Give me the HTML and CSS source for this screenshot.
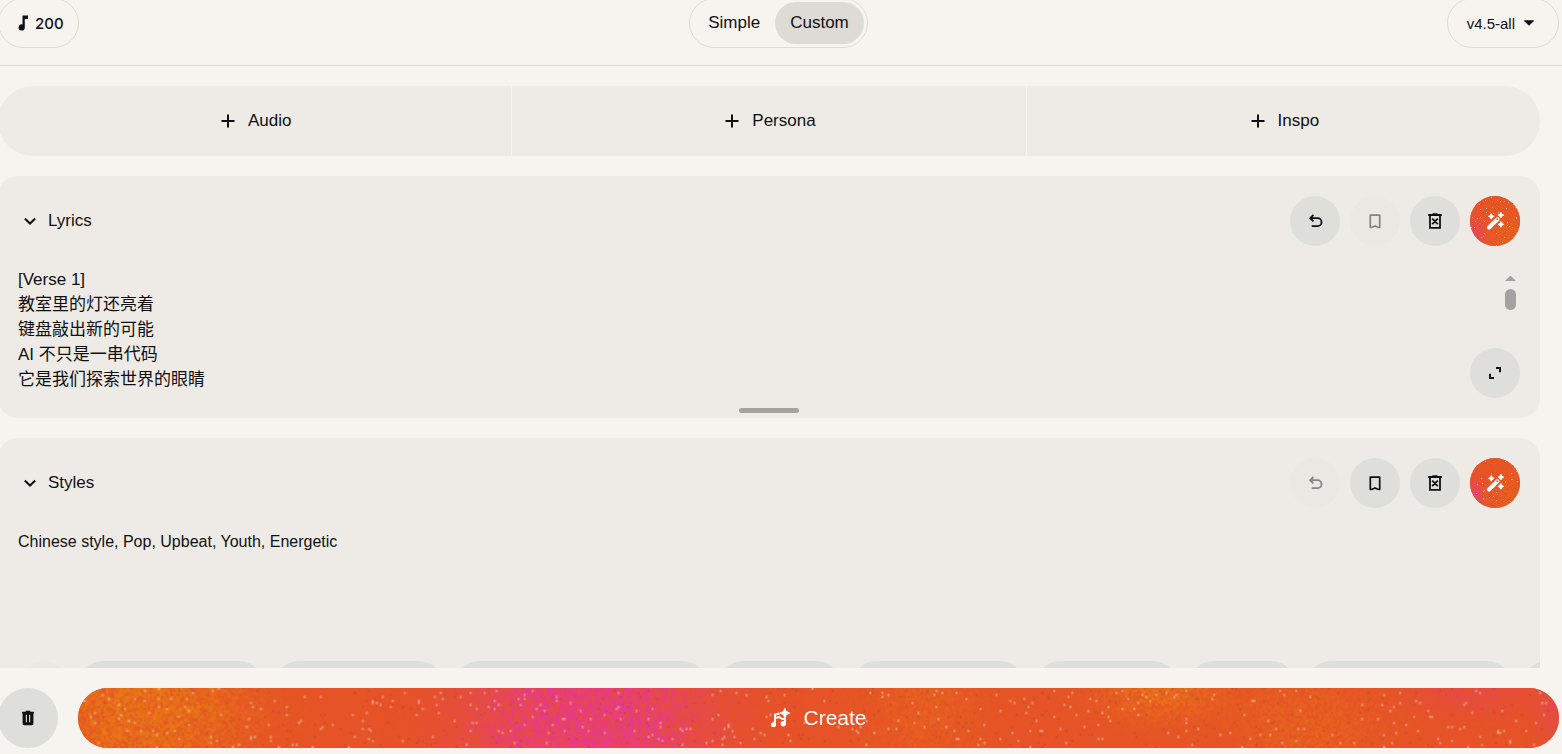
FILE: index.html
```html
<!DOCTYPE html>
<html lang="en">
<head>
  <meta charset="UTF-8">
  <meta name="viewport" content="width=device-width, initial-scale=1.0">
  <title>Create</title>
  <link rel="stylesheet" href="styles.css">
</head>
<body>
  <svg class="sprite" aria-hidden="true">
    <symbol id="plus" viewBox="0 0 20 20"><path d="M10 3.5v13M3.5 10h13" fill="none" stroke="currentColor" stroke-width="2"/></symbol>
    <symbol id="chevron" viewBox="0 0 20 20"><path d="M4.8 7.5l5.2 5 5.2-5" fill="none" stroke="currentColor" stroke-width="2"/></symbol>
    <symbol id="undo" viewBox="0 0 20 20"><path d="M8.4 4L5.2 7.2l3.2 3.2M5.2 7.2h7.4a3.9 3.9 0 0 1 0 7.9H6.7" fill="none" stroke="currentColor" stroke-width="1.8"/></symbol>
    <symbol id="bookmark" viewBox="0 0 20 20"><path d="M5.3 4.2h9.4v12.3q-2.5.2-4.7-1.6-2.2 1.8-4.7 1.6z" fill="none" stroke="currentColor" stroke-width="1.7" stroke-linejoin="round"/></symbol>
    <symbol id="clear" viewBox="0 0 20 20"><path d="M3.2 4h13.6M7.5 3.2h5M5 4v12.8h10V4M7.2 7.6l5.6 5.6M12.8 7.6l-5.6 5.6" fill="none" stroke="currentColor" stroke-width="1.8"/></symbol>
    <symbol id="wand" viewBox="0 0 20 20">
      <path d="M4 16.5L12.5 8.2" stroke="currentColor" stroke-width="4" stroke-linecap="round"/>
      <circle cx="12.3" cy="8.3" r="1" fill="#e65528"/>
      <path d="M6.3 2.6l.9 1.9 1.9.9-1.9.9-.9 1.9-.9-1.9-1.9-.9 1.9-.9zM15.9 1.3l.9 1.9 1.9.9-1.9.9-.9 1.9-.9-1.9-1.9-.9 1.9-.9zM15.9 10.6l.9 1.9 1.9.9-1.9.9-.9 1.9-.9-1.9-1.9-.9 1.9-.9z" fill="currentColor" stroke="currentColor"/>
    </symbol>
    <symbol id="expand" viewBox="0 0 20 20"><path d="M11 5h4v4.3M5 10.7V15h4" fill="none" stroke="currentColor" stroke-width="2"/></symbol>
    <symbol id="trash" viewBox="0 0 20 20"><path fill-rule="evenodd" d="M7.7 2.8h4.6v1H16v1.7h-.6v10.2q0 1.5-1.5 1.5H6.1q-1.5 0-1.5-1.5V5.5H4V3.8h3.7zM7.8 6.8v7.4h1.1V6.8zM11.1 6.8v7.4h1.1V6.8z" fill="currentColor"/></symbol>
    <symbol id="note" viewBox="0 0 20 20"><path d="M9.5 2.5H15V6h-3.2v8.5a3.1 3.1 0 1 1-2.3-3z" fill="currentColor"/></symbol>
    <symbol id="caret" viewBox="0 0 20 20"><path d="M5.5 7.8h9L10 12.3z" fill="currentColor" stroke="currentColor" stroke-linejoin="round"/></symbol>
    <symbol id="compose" viewBox="0 0 20 20">
      <path d="M5 16.5V6.5l4.5-.8M5 10l4.5-1q2 2.6 5.5 2v5" fill="none" stroke="currentColor" stroke-width="2"/>
      <circle cx="3.5" cy="16.8" r="2.5" fill="currentColor"/>
      <circle cx="13.3" cy="15.7" r="2.7" fill="currentColor"/>
      <path d="M14.9.2q.6 4.2 4.8 4.9-4.2.7-4.8 4.9-.6-4.2-4.8-4.9 4.2-.7 4.8-4.9z" fill="currentColor" stroke="currentColor"/>
    </symbol>
  </svg>

  <div class="app">
    <header class="topbar">
      <button class="pill credits"><svg class="icon"><use href="#note"/></svg>200</button>
      <div class="pill toggle">
        <button>Simple</button>
        <button class="active">Custom</button>
      </div>
      <button class="pill version">v4.5-all<svg class="icon"><use href="#caret"/></svg></button>
    </header>

    <main class="content">
      <div class="sources">
        <button><svg class="icon"><use href="#plus"/></svg>Audio</button>
        <button><svg class="icon"><use href="#plus"/></svg>Persona</button>
        <button><svg class="icon"><use href="#plus"/></svg>Inspo</button>
      </div>

      <section class="card">
        <div class="card-head">
          <svg class="icon"><use href="#chevron"/></svg>
          <label for="lyrics">Lyrics</label>
          <div class="actions">
            <button class="round"><svg class="icon"><use href="#undo"/></svg></button>
            <button class="round" disabled><svg class="icon"><use href="#bookmark"/></svg></button>
            <button class="round"><svg class="icon"><use href="#clear"/></svg></button>
            <button class="round magic"><canvas class="grain"></canvas><svg class="icon"><use href="#wand"/></svg></button>
          </div>
        </div>
        <div class="lyrics-box">
          <textarea id="lyrics" class="lyrics" spellcheck="false">[Verse 1]
教室里的灯还亮着
键盘敲出新的可能
AI 不只是一串代码
它是我们探索世界的眼睛</textarea>
          <div class="scrollbar"><i class="arrow"></i><i class="thumb"></i></div>
          <button class="round expand"><svg class="icon"><use href="#expand"/></svg></button>
        </div>
        <div class="resize"></div>
      </section>

      <section class="card">
        <div class="card-head">
          <svg class="icon"><use href="#chevron"/></svg>
          <label for="styles">Styles</label>
          <div class="actions">
            <button class="round" disabled><svg class="icon"><use href="#undo"/></svg></button>
            <button class="round"><svg class="icon"><use href="#bookmark"/></svg></button>
            <button class="round"><svg class="icon"><use href="#clear"/></svg></button>
            <button class="round magic"><canvas class="grain"></canvas><svg class="icon"><use href="#wand"/></svg></button>
          </div>
        </div>
        <textarea id="styles" class="styles" spellcheck="false">Chinese style, Pop, Upbeat, Youth, Energetic</textarea>
        <div class="chips">
          <button class="round" disabled></button>
          <button class="chip"></button>
          <button class="chip"></button>
          <button class="chip"></button>
          <button class="chip"></button>
          <button class="chip"></button>
          <button class="chip"></button>
          <button class="chip"></button>
          <button class="chip"></button>
          <button class="chip"></button>
        </div>
      </section>
    </main>

    <footer class="bottombar">
      <button class="round large"><svg class="icon"><use href="#trash"/></svg></button>
      <button class="create"><canvas class="grain"></canvas><svg class="icon"><use href="#compose"/></svg><span>Create</span></button>
    </footer>
  </div>

  <script src="grain.js"></script>
</body>
</html>
```
FILE: styles.css
```css
* {
  box-sizing: border-box;
}
body {
  margin: 0;
  height: 100vh;
  overflow: hidden;
  background: #f7f3ee;
  color: #101012;
  font-family: "Liberation Sans", "Noto Sans CJK SC", sans-serif;
  font-size: 17px;
}
button, textarea {
  font: inherit;
  color: inherit;
  border: none;
  background: none;
  padding: 0;
  margin: 0;
}
button {
  display: flex;
  align-items: center;
  justify-content: center;
  cursor: pointer;
}
textarea {
  display: block;
  width: 100%;
  resize: none;
  outline: none;
  overflow: hidden;
  line-height: 25px;
}
.sprite {
  display: none;
}
.icon {
  width: 20px;
  height: 20px;
  flex: none;
}
.app {
  display: flex;
  flex-direction: column;
  height: calc(100vh + 2px);
  margin: -2px 0 0 -2px;
}

/* top bar */
.topbar {
  display: grid;
  grid-template-columns: 1fr auto 1fr;
  padding: 0 3px 17px 0;
  border-bottom: 1px solid #dedbd6;
}
.pill {
  height: 50px;
  border: 1px solid #dedbd6;
  border-radius: 25px;
}
.credits {
  justify-self: start;
  padding: 0 14px;
  gap: 2px;
  font-family: Inter, sans-serif;
  font-size: 15px;
  font-weight: 500;
}
.toggle {
  display: flex;
  padding: 3px;
}
.toggle button {
  padding: 0 15px;
  border-radius: 21px;
}
.toggle .active {
  background: #dedbd6;
}
.version {
  justify-self: end;
  gap: 4px;
  padding: 0 19px;
  font-size: 15px;
}

.content {
  flex: 1;
  min-height: 0;
  overflow: hidden;
  display: flex;
  flex-direction: column;
  gap: 20px;
  padding: 20px 22px 0 0;
}
.sources {
  flex: none;
  display: grid;
  grid-template-columns: repeat(3, 1fr);
  gap: 1px;
  height: 70px;
  border-radius: 35px;
  overflow: hidden;
}
.sources button {
  gap: 10px;
  background: #eeebe6;
}
.card {
  flex: none;
  padding: 20px 20px 5px;
  border-radius: 20px;
  background: #eeebe6;
  overflow: hidden;
}
.card-head {
  display: flex;
  align-items: center;
  gap: 8px;
  padding-left: 2px;
  margin-bottom: 21px;
}
.actions {
  display: flex;
  gap: 10px;
  margin-left: auto;
}
.round {
  flex: none;
  width: 50px;
  height: 50px;
  border-radius: 50%;
  background: #dededa;
}
.round:disabled {
  background: #ebe8e3;
  color: #858381;
}
.large {
  width: 60px;
  height: 60px;
}
.magic, .create {
  position: relative;
  overflow: hidden;
  background: #e65528;
  color: #fff;
}
.grain {
  position: absolute;
  inset: 0;
  width: 100%;
  height: 100%;
}
.magic .icon, .create .icon, .create span {
  position: relative;
}
.lyrics-box {
  position: relative;
  display: flex;
}
.lyrics {
  height: 125px;
}
.scrollbar {
  flex: none;
  padding: 9px 4px 0;
}
.arrow {
  display: block;
  border: 5px solid transparent;
  border-top: none;
  border-bottom-color: #a3a2a0;
}
.thumb {
  display: block;
  width: 11px;
  height: 21px;
  margin-top: 8px;
  border-radius: 6px;
  background: #a3a2a0;
}
.expand {
  position: absolute;
  right: 0;
  bottom: -6px;
}
.resize {
  width: 60px;
  height: 5px;
  margin: 16px auto 0;
  border-radius: 3px;
  background: #a3a2a0;
}
.styles {
  height: 132px;
  font-size: 16px;
}
.chips {
  display: flex;
  gap: 10px;
  margin-right: -20px;
  overflow: hidden;
}
.chip {
  flex: none;
  width: 172px;
  height: 50px;
  border-radius: 25px;
  background: #dededa;
}
.chip:nth-child(2) { width: 186px; }
.chip:nth-child(3) { width: 170px; }
.chip:nth-child(4) { width: 254px; }
.chip:nth-child(5) { width: 123px; }
.chip:nth-child(6) { width: 174px; }
.chip:nth-child(7) { width: 143px; }
.chip:nth-child(8) { width: 108px; }
.chip:nth-child(9) { width: 206px; }

/* bottom bar */
.bottombar {
  display: flex;
  gap: 20px;
  padding: 20px 3px 6px 0;
}
.create {
  flex: 1;
  height: 60px;
  gap: 13px;
  border-radius: 30px;
  font-size: 21px;
}
```
FILE: grain.js
```javascript
// speckled orange fill for the create and magic buttons
let seed = 7;
function rand() {
  seed = (seed * 16807) % 2147483647;
  return seed / 2147483647;
}

const orange = [230, 83, 38];
const amber = [232, 120, 20];
const pink = [232, 58, 140];

// x, y, radius x, radius y, strength, colour (all relative to the button)
const wideSpots = [
  [0.045, 0.2, 0.065, 1.2, 0.8, amber],
  [0.345, 0.5, 0.07, 1.6, 0.95, pink],
  [0.57, 0.3, 0.04, 1, 0.25, amber],
  [0.73, 0, 0.04, 0.5, 0.6, amber],
  [0.83, 0.6, 0.05, 1, 0.3, amber],
  [0.94, 0, 0.04, 0.4, 0.25, pink],
  [1, 0.3, 0.015, 0.8, 0.3, pink]
];
const roundSpots = [
  [0, 0.75, 0.25, 0.3, 0.6, pink],
  [0.8, 0.8, 0.5, 0.6, 0.25, amber]
];

document.querySelectorAll('.grain').forEach(canvas => {
  const wide = canvas.clientWidth > 100;
  const step = wide ? 2 : 1;
  const w = canvas.width = Math.ceil(canvas.clientWidth / step);
  const h = canvas.height = Math.ceil(canvas.clientHeight / step);
  const ctx = canvas.getContext('2d');
  const spots = wide ? wideSpots : roundSpots;

  for (let y = 0; y < h; y++) {
    for (let x = 0; x < w; x++) {
      let c = orange;
      spots.forEach(([sx, sy, rx, ry, power, color]) => {
        const dx = (x / w - sx) / rx;
        const dy = (y / h - sy) / ry;
        const k = power * Math.exp(-dx * dx - dy * dy);
        const mix = Math.min(1, k * 2 * rand());
        c = c.map((v, i) => v + (color[i] - v) * mix);
      });
      const r = rand();
      if (r < 0.018) {
        c = c.map(v => v + (255 - v) * 0.45);
      } else if (r < 0.036) {
        c = c.map(v => v * 0.85 + 8);
      }
      ctx.fillStyle = `rgb(${c.map(Math.round).join(',')})`;
      ctx.fillRect(x, y, 1, 1);
    }
  }
});
```
